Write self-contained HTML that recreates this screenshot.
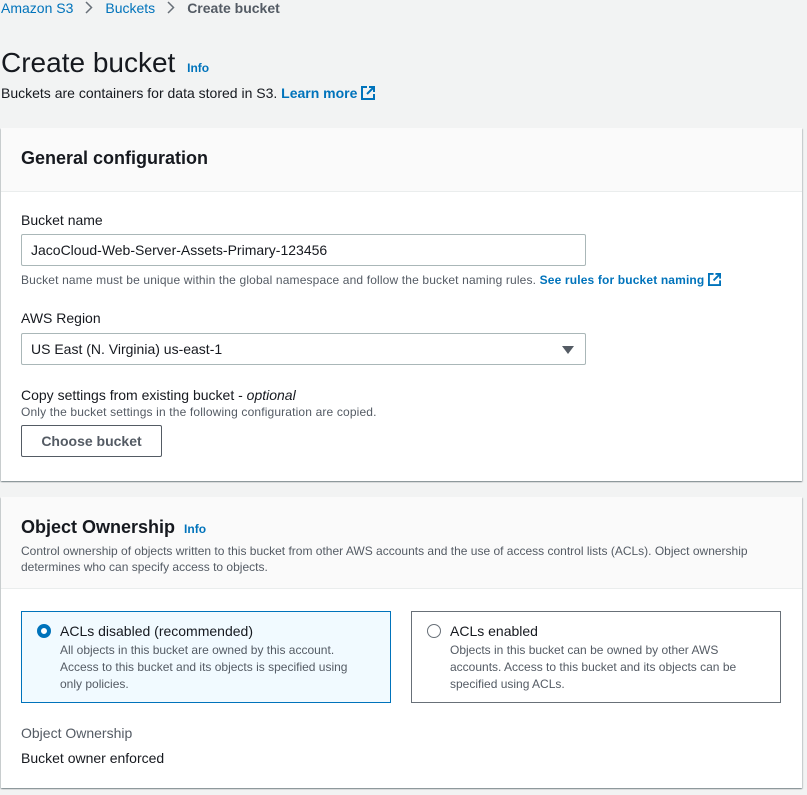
<!DOCTYPE html>
<html><head><meta charset="utf-8"><style>
*{box-sizing:border-box;margin:0;padding:0}
body{width:807px;height:795px;background:#f2f3f3;font-family:"Liberation Sans",sans-serif;color:#16191f;position:relative;overflow:hidden;font-size:14px}
.a{position:absolute;white-space:nowrap}
.link{color:#0073bb}
.panel{position:absolute;left:1px;width:801px;background:#fff;box-shadow:0 1px 1px rgba(0,28,36,.3),1px 1px 1px rgba(0,28,36,.15),-1px 1px 1px rgba(0,28,36,.15)}
.ph{background:#fafafa;border-bottom:1px solid #eaeded}
.input{position:absolute;border:1px solid #aab7b8;border-radius:2px;background:#fff;height:32px;padding-left:9px;line-height:30px;font-size:14px}
.small{font-size:12px;color:#545b64;letter-spacing:0.15px}
.card{position:absolute;border:1px solid #687078;width:370px;height:92px}
.chev{margin:0 12px;vertical-align:-1px}
</style></head><body>
<div class="a" style="left:1px;top:0;font-size:14px"><span class="link">Amazon S3</span><svg class="chev" width="8" height="13" viewBox="0 0 8 13"><path d="M1 1l5.5 5.5L1 12" stroke="#687078" stroke-width="1.5" fill="none"/></svg><span class="link">Buckets</span><svg class="chev" width="8" height="13" viewBox="0 0 8 13"><path d="M1 1l5.5 5.5L1 12" stroke="#687078" stroke-width="1.5" fill="none"/></svg><span style="color:#545b64;font-weight:bold">Create bucket</span></div>
<div class="a" style="left:1px;top:47px;font-size:28px">Create bucket <span class="link" style="font-size:12px;font-weight:bold;margin-left:4px">Info</span></div>
<div class="a" style="left:1px;top:85px;font-size:14px">Buckets are containers for data stored in S3. <span class="link" style="font-weight:bold">Learn more</span> <svg width="14" height="14" viewBox="0 0 14 14" style="vertical-align:-2px"><path d="M6 1H1v12h12V8M8 1h5v5M13 1L6 8" stroke="#0073bb" stroke-width="2" fill="none"/></svg></div>

<div class="panel" style="top:128px;height:353px">
<div class="ph" style="height:64px"></div>
<div class="a" style="left:20px;top:20px;font-size:18px;font-weight:bold">General configuration</div>
<div class="a" style="left:20px;top:84px">Bucket name</div>
<div class="input" style="left:20px;top:106px;width:565px">JacoCloud-Web-Server-Assets-Primary-123456</div>
<div class="a small" style="left:20px;top:145px">Bucket name must be unique within the global namespace and follow the bucket naming rules. <span class="link" style="font-weight:bold">See rules for bucket naming</span> <svg width="13" height="13" viewBox="0 0 14 14" style="vertical-align:-2px"><path d="M6 1H1v12h12V8M8 1h5v5M13 1L6 8" stroke="#0073bb" stroke-width="2" fill="none"/></svg></div>
<div class="a" style="left:20px;top:182px">AWS Region</div>
<div class="input" style="left:20px;top:205px;width:565px">US East (N. Virginia) us-east-1<svg width="12" height="8" style="position:absolute;right:11px;top:12px"><path d="M0 0h12L6 8z" fill="#545b64"/></svg></div>
<div class="a" style="left:20px;top:259px">Copy settings from existing bucket - <i>optional</i></div>
<div class="a small" style="left:20px;top:277px">Only the bucket settings in the following configuration are copied.</div>
<div class="a" style="left:20px;top:297px;width:141px;height:32px;border:1px solid #545b64;border-radius:2px;text-align:center;line-height:30px;font-weight:bold;color:#545b64">Choose bucket</div>
</div>

<div class="panel" style="top:497px;height:291px">
<div class="ph" style="height:92px"></div>
<div class="a" style="left:20px;top:20px;font-size:18px;font-weight:bold">Object Ownership <span class="link" style="font-size:12px;margin-left:4px">Info</span></div>
<div class="a small" style="left:20px;top:46px;line-height:16px;white-space:normal;width:770px;letter-spacing:0">Control ownership of objects written to this bucket from other AWS accounts and the use of access control lists (ACLs). Object ownership determines who can specify access to objects.</div>
<div class="card" style="left:20px;top:114px;border-color:#0073bb;background:#f1faff">
<div class="a" style="left:15px;top:12px;width:14px;height:14px;border-radius:50%;border:4px solid #0073bb;background:#fff"></div>
<div class="a" style="left:38px;top:11px">ACLs disabled (recommended)</div>
<div class="a small" style="left:38px;top:30px;line-height:17px;letter-spacing:0">All objects in this bucket are owned by this account.<br>Access to this bucket and its objects is specified using<br>only policies.</div>
</div>
<div class="card" style="left:410px;top:114px">
<div class="a" style="left:15px;top:12px;width:14px;height:14px;border-radius:50%;border:1px solid #687078;background:#fff"></div>
<div class="a" style="left:38px;top:11px">ACLs enabled</div>
<div class="a small" style="left:38px;top:30px;line-height:17px;letter-spacing:0">Objects in this bucket can be owned by other AWS<br>accounts. Access to this bucket and its objects can be<br>specified using ACLs.</div>
</div>
<div class="a" style="left:20px;top:228px;color:#545b64">Object Ownership</div>
<div class="a" style="left:20px;top:253px">Bucket owner enforced</div>
</div>
</body></html>
